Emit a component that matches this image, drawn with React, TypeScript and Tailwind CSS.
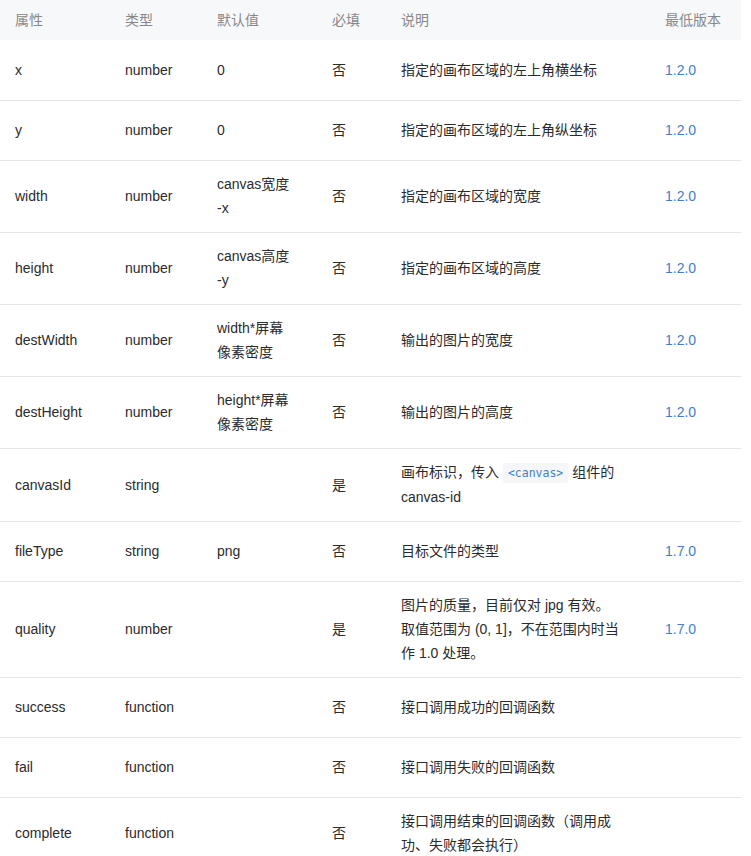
import React from "react";

type Row = {
  name: string;
  type: string;
  def?: React.ReactNode;
  required: string;
  desc: React.ReactNode;
  version?: string;
};

const rows: Row[] = [
  { name: "x", type: "number", def: "0", required: "否", desc: "指定的画布区域的左上角横坐标", version: "1.2.0" },
  { name: "y", type: "number", def: "0", required: "否", desc: "指定的画布区域的左上角纵坐标", version: "1.2.0" },
  { name: "width", type: "number", def: <>canvas宽度<br />-x</>, required: "否", desc: "指定的画布区域的宽度", version: "1.2.0" },
  { name: "height", type: "number", def: <>canvas高度<br />-y</>, required: "否", desc: "指定的画布区域的高度", version: "1.2.0" },
  { name: "destWidth", type: "number", def: <>width*屏幕<br />像素密度</>, required: "否", desc: "输出的图片的宽度", version: "1.2.0" },
  { name: "destHeight", type: "number", def: <>height*屏幕<br />像素密度</>, required: "否", desc: "输出的图片的高度", version: "1.2.0" },
  {
    name: "canvasId",
    type: "string",
    required: "是",
    desc: (
      <>
        画布标识，传入{" "}
        <code className="rounded-[2px] bg-[#f5f6f8] px-[5px] py-[3px] font-['DejaVu_Sans_Mono',monospace] text-[11.5px] text-[#3f7ecf]">
          &lt;canvas&gt;
        </code>{" "}
        组件的
        <br />
        canvas-id
      </>
    ),
  },
  { name: "fileType", type: "string", def: "png", required: "否", desc: "目标文件的类型", version: "1.7.0" },
  {
    name: "quality",
    type: "number",
    required: "是",
    desc: (
      <>
        图片的质量，目前仅对 jpg 有效。
        <br />
        取值范围为 (0, 1]，不在范围内时当
        <br />
        作 1.0 处理。
      </>
    ),
    version: "1.7.0",
  },
  { name: "success", type: "function", required: "否", desc: "接口调用成功的回调函数" },
  { name: "fail", type: "function", required: "否", desc: "接口调用失败的回调函数" },
  {
    name: "complete",
    type: "function",
    required: "否",
    desc: (
      <>
        接口调用结束的回调函数（调用成
        <br />
        功、失败都会执行）
      </>
    ),
  },
];

const headers = ["属性", "类型", "默认值", "必填", "说明", "最低版本"];

export default function App() {
  return (
    <div className="min-h-screen bg-white font-['Liberation_Sans','Noto_Sans_CJK_SC',sans-serif] text-[14px] text-[#2b2b2b]">
      <table className="w-[741px] table-fixed border-collapse">
        <colgroup>
          <col className="w-[110px]" />
          <col className="w-[92px]" />
          <col className="w-[115px]" />
          <col className="w-[69px]" />
          <col className="w-[264px]" />
          <col className="w-[91px]" />
        </colgroup>
        <thead>
          <tr className="h-[40px] bg-[#f7f8fa]">
            {headers.map((h) => (
              <th key={h} className="px-[15px] text-left align-middle font-normal leading-[24px] text-[#888]">
                {h}
              </th>
            ))}
          </tr>
        </thead>
        <tbody>
          {rows.map((r) => (
            <tr key={r.name} className="h-[60px] border-b border-[#e5e5e5]">
              <td className="px-[15px] py-[11.5px] align-middle leading-[24px]">{r.name}</td>
              <td className="px-[15px] py-[11.5px] align-middle leading-[24px]">{r.type}</td>
              <td className="px-[15px] py-[11.5px] align-middle leading-[24px]">{r.def}</td>
              <td className="px-[15px] py-[11.5px] align-middle leading-[24px]">{r.required}</td>
              <td className="px-[15px] py-[11.5px] align-middle leading-[24px]">{r.desc}</td>
              <td className="px-[15px] py-[11.5px] align-middle leading-[24px] text-[#3f7ecf]">{r.version}</td>
            </tr>
          ))}
        </tbody>
      </table>
    </div>
  );
}
